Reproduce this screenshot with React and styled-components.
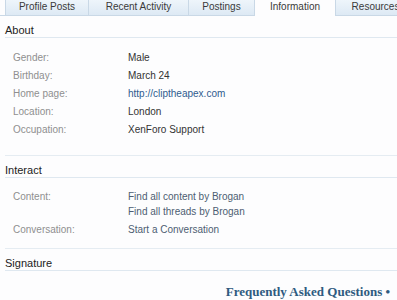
import styled, { createGlobalStyle } from "styled-components";

const Global = createGlobalStyle`
  body {
    margin: 0;
    background: #fdfdfe;
    overflow: hidden;
    font-family: "Liberation Sans", Arial, sans-serif;
  }
`;

const Page = styled.div`
  width: 420px;
  font-size: 10px;
  color: #333;
`;

const Tabs = styled.ul`
  display: flex;
  list-style: none;
  margin: 0;
  padding: 0 0 0 5px;
  height: 15px;
  border-bottom: 1px solid #c9d8e6;
`;

const Tab = styled.li`
  box-sizing: border-box;
  width: ${(p) => p.w}px;
  height: ${(p) => (p.active ? 16 : 15)}px;
  line-height: 14px;
  text-align: center;
  color: #3a3a3a;
  border-right: 1px solid #c9d8e6;
  border-left: ${(p) => (p.first ? "1px solid #c9d8e6" : "none")};
  background: ${(p) =>
    p.active ? "#fdfdfe" : "linear-gradient(#eef5fb, #dde9f4)"};
`;

const Section = styled.section`
  margin: 0 0 0 5px;
`;

const Heading = styled.h3`
  margin: 0;
  padding: 8px 0 0;
  height: 22px;
  box-sizing: border-box;
  font-size: 11px;
  font-weight: normal;
  color: #222;
  border-bottom: 1px solid #dfe8f0;
`;

const List = styled.dl`
  margin: 0;
  padding: ${(p) => p.pad};
  border-bottom: 1px solid #e5ecf2;
`;

const Row = styled.div`
  display: grid;
  grid-template-columns: 115px 1fr;
  padding-left: 8px;
  line-height: 15px;
  margin-bottom: 3px;
`;

const Label = styled.dt`
  color: #8f8f8f;
`;

const Value = styled.dd`
  margin: 0;
  color: ${(p) => (p.link ? "#2f5b8e" : p.soft ? "#4d5d72" : "#333")};
`;

const Footer = styled.div`
  display: flex;
  justify-content: flex-end;
  padding: 13px 0 0;
  font-family: "Liberation Serif", "Times New Roman", serif;
  font-weight: bold;
  font-size: 13px;
  color: #2f5b80;
  margin-right: 30px;
`;

const tabs = [
  { label: "Profile Posts", w: 84 },
  { label: "Recent Activity", w: 100 },
  { label: "Postings", w: 66 },
  { label: "Information", w: 81, active: true },
  { label: "Resources", w: 80 },
];

export default function App() {
  return (
    <Page>
      <Global />
      <Tabs>
        {tabs.map((t, i) => (
          <Tab key={t.label} w={t.w} active={t.active} first={i === 0}>
            {t.label}
          </Tab>
        ))}
      </Tabs>
      <Section>
        <Heading>About</Heading>
        <List pad="12px 0 15px">
          <Row><Label>Gender:</Label><Value>Male</Value></Row>
          <Row><Label>Birthday:</Label><Value>March 24</Value></Row>
          <Row><Label>Home page:</Label><Value link>http://cliptheapex.com</Value></Row>
          <Row><Label>Location:</Label><Value>London</Value></Row>
          <Row><Label>Occupation:</Label><Value>XenForo Support</Value></Row>
        </List>
        <Heading>Interact</Heading>
        <List pad="11px 0 8px">
          <Row>
            <Label>Content:</Label>
            <Value soft>
              Find all content by Brogan
              <br />
              Find all threads by Brogan
            </Value>
          </Row>
          <Row><Label>Conversation:</Label><Value soft>Start a Conversation</Value></Row>
        </List>
        <Heading>Signature</Heading>
      </Section>
      <Footer>Frequently Asked Questions •</Footer>
    </Page>
  );
}
